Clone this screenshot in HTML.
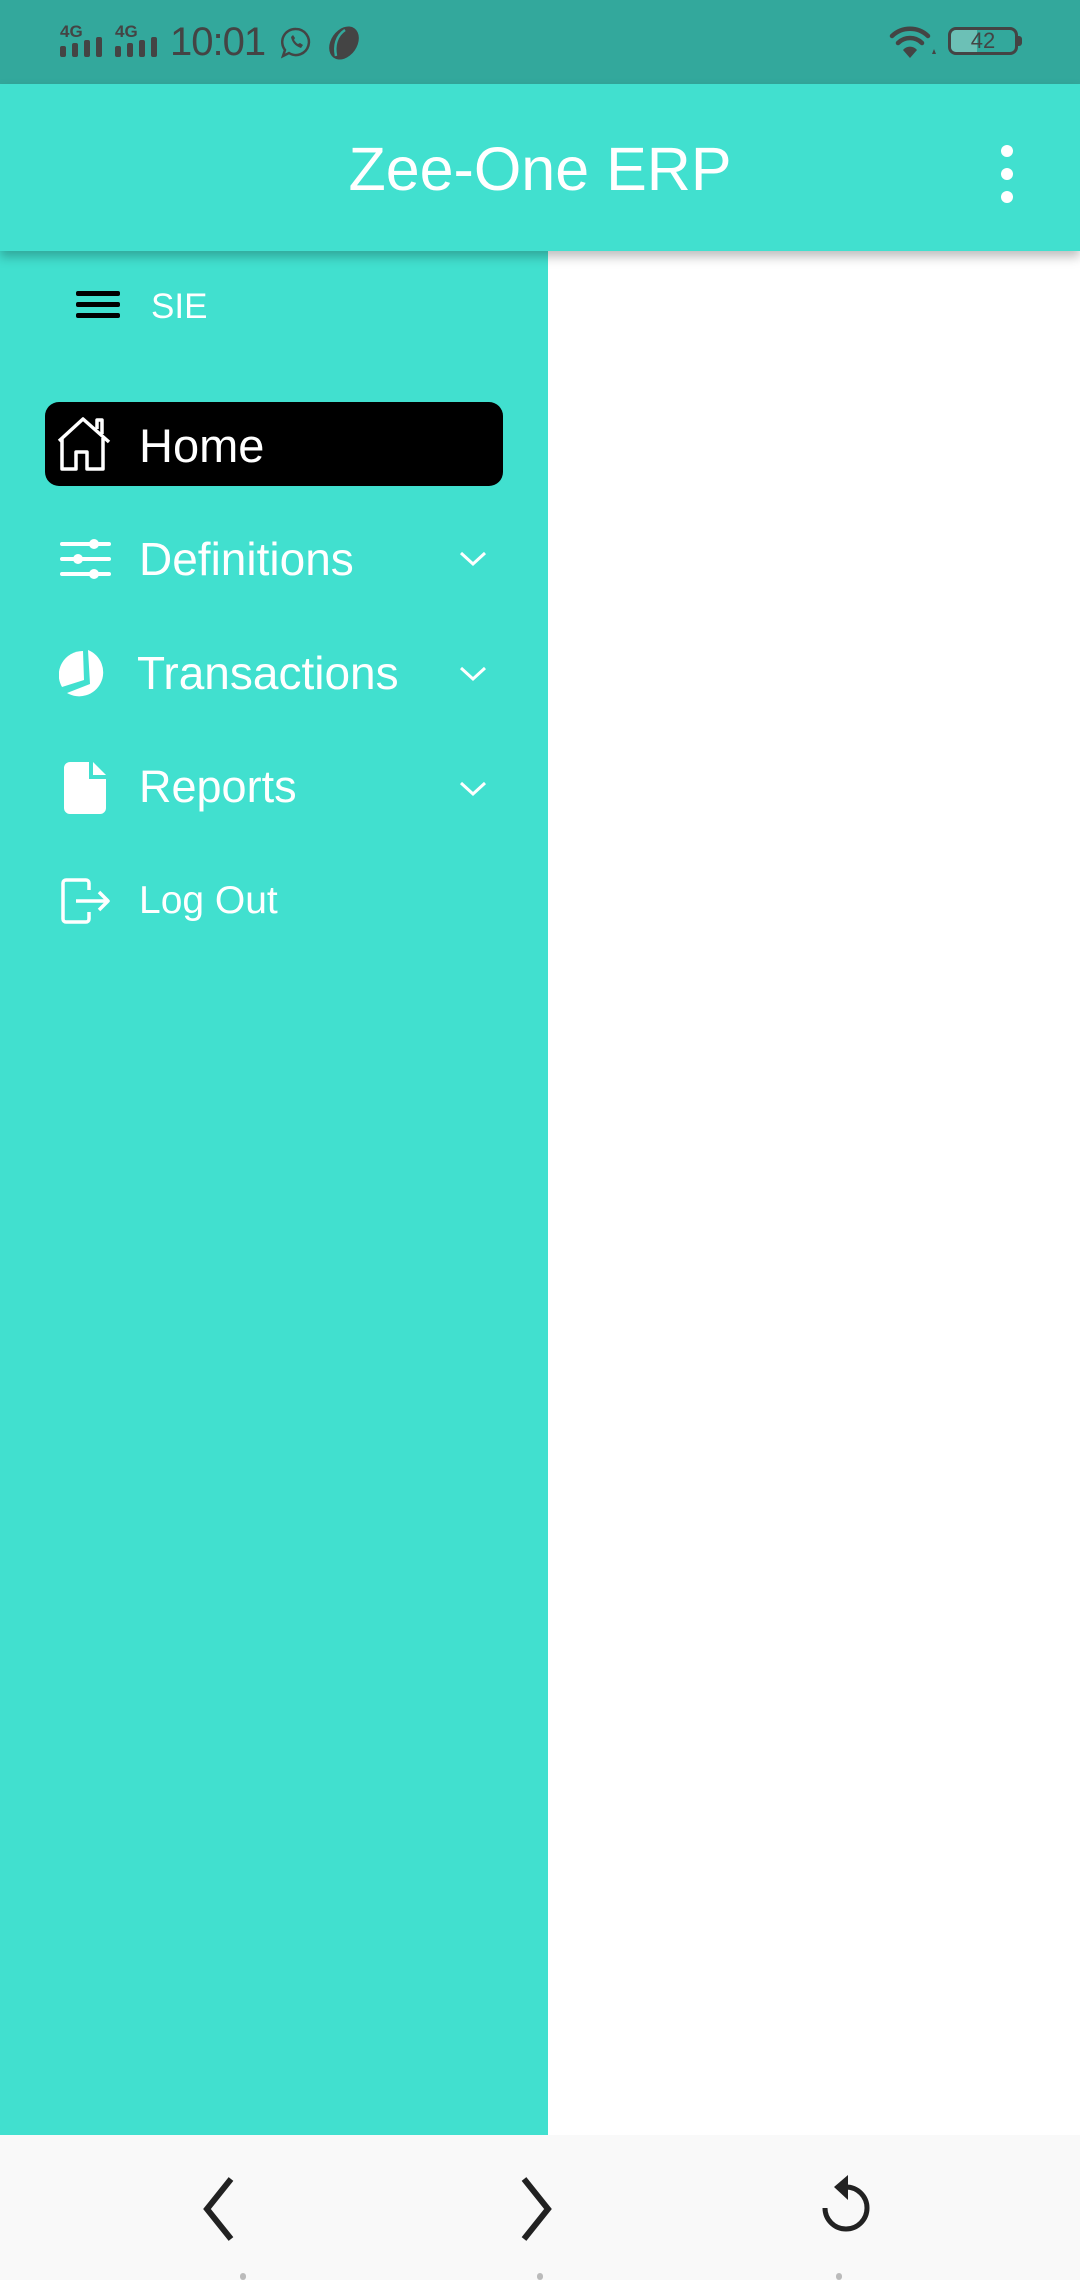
<!DOCTYPE html>
<html><head><meta charset="utf-8"><style>
*{margin:0;padding:0;box-sizing:border-box}
body{width:1080px;height:2280px;position:relative;overflow:hidden;background:#fff;font-family:"Liberation Sans",sans-serif}
.abs{position:absolute}
.t{position:absolute;color:#fff;white-space:nowrap;line-height:1}
</style></head><body>
<!-- status bar -->
<div class="abs" style="left:0;top:0;width:1080px;height:84px;background:#33a89c"></div>
<div class="abs" style="left:60px;top:22px;font-size:17px;font-weight:bold;color:#444">4G</div>
<div class="abs" style="left:115px;top:22px;font-size:17px;font-weight:bold;color:#444">4G</div>
<svg class="abs" style="left:58px;top:36px" width="110" height="22">
<g fill="#444"><rect x="2" y="10" width="6" height="11" rx="2"/><rect x="14" y="7" width="6" height="14" rx="2"/><rect x="26" y="4" width="6" height="17" rx="2"/><rect x="38" y="1" width="6" height="20" rx="2"/>
<rect x="57" y="10" width="6" height="11" rx="2"/><rect x="69" y="7" width="6" height="14" rx="2"/><rect x="81" y="4" width="6" height="17" rx="2"/><rect x="93" y="1" width="6" height="20" rx="2"/></g></svg>
<div class="abs" style="left:170px;top:20px;font-size:40px;color:#444;letter-spacing:-1px">10:01</div>
<svg class="abs" style="left:279px;top:26px" width="34" height="34" viewBox="0 0 34 34"><path d="M17 3a13 13 0 1 1-7 24l-6 3 2-6A13 13 0 0 1 17 3z" fill="none" stroke="#444" stroke-width="2.5"/><path d="M12 11c1 5 4 9 10 11l2-3-3-2-2 1c-2-1-3-3-4-4l1-2-2-3z" fill="#444"/></svg>
<svg class="abs" style="left:325px;top:25px" width="38" height="36" viewBox="0 0 38 36"><ellipse cx="19" cy="18" rx="18" ry="13" transform="rotate(-55 19 18)" fill="#444"/><path d="M20 5c-9 6-11 16-9 26" stroke="#33a89c" stroke-width="2.5" fill="none"/></svg>
<svg class="abs" style="left:888px;top:24px" width="50" height="36" viewBox="0 0 50 36"><g fill="none" stroke="#444" stroke-width="4.5" stroke-linecap="round"><path d="M4 12a26 26 0 0 1 36 0"/><path d="M10 19a17 17 0 0 1 24 0"/></g><path d="M15 26a9 9 0 0 1 14 0l-7 8z" fill="#444"/><path d="M44 30l4 0l-2-5z" fill="#444"/></svg>
<div class="abs" style="left:948px;top:27px;width:70px;height:28px;border:3.5px solid #444;border-radius:8px;overflow:hidden"><div style="width:26px;height:100%;background:#6cc0b6"></div></div>
<div class="abs" style="left:1018px;top:36px;width:4px;height:10px;background:#444;border-radius:0 3px 3px 0"></div>
<div class="abs" style="left:948px;top:28px;width:70px;text-align:center;font-size:22px;color:#444;line-height:26px">42</div>
<!-- app bar -->
<div class="abs" style="left:0;top:84px;width:1080px;height:167px;background:#41e0cf;box-shadow:0 6px 10px rgba(0,0,0,0.25);z-index:2"></div>
<div class="t" style="left:0;width:1080px;text-align:center;top:139px;font-size:61px;z-index:3">Zee-One ERP</div>
<div class="abs" style="left:1001px;top:145px;z-index:3"><div style="width:12px;height:12px;border-radius:6px;background:#fff;margin-bottom:11px"></div><div style="width:12px;height:12px;border-radius:6px;background:#fff;margin-bottom:11px"></div><div style="width:12px;height:12px;border-radius:6px;background:#fff"></div></div>
<!-- drawer -->
<div class="abs" style="left:0;top:251px;width:548px;height:1884px;background:#41e0cf"></div>
<div class="abs" style="left:76px;top:291px;width:44px;height:5px;background:#000;border-radius:2px"></div>
<div class="abs" style="left:76px;top:302px;width:44px;height:5px;background:#000;border-radius:2px"></div>
<div class="abs" style="left:76px;top:313px;width:44px;height:5px;background:#000;border-radius:2px"></div>
<div class="t" style="left:151px;top:289px;font-size:35px">SIE</div>
<div class="abs" style="left:45px;top:402px;width:458px;height:84px;background:#000;border-radius:14px"></div>
<svg class="abs" style="left:56px;top:414px" width="60" height="60" viewBox="0 0 60 60"><path d="M3 27L27 5 53 28M6 24V55H20V38H31V55H47V24M41 15V6H46V20" fill="none" stroke="#fff" stroke-width="3.5" stroke-linejoin="round"/></svg>
<div class="t" style="left:139px;top:422px;font-size:47px">Home</div>
<svg class="abs" style="left:60px;top:538px" width="52" height="42" viewBox="0 0 52 42"><g stroke="#fff" stroke-width="4" stroke-linecap="round"><path d="M2 6H49M2 21H49M2 36H49"/></g><g fill="#fff"><circle cx="34" cy="6" r="5"/><circle cx="18" cy="21" r="5"/><circle cx="34" cy="36" r="5"/></g></svg>
<div class="t" style="left:139px;top:536px;font-size:46px">Definitions</div>
<svg class="abs" style="left:459px;top:550px" width="28" height="18"><path d="M2 3L14 14 26 3" fill="none" stroke="#fff" stroke-width="3"/></svg>
<svg class="abs" style="left:59px;top:647px" width="54" height="54" viewBox="0 0 54 54"><path d="M29 3A24 24 0 1 1 8 46L31 37z" fill="#fff"/><path d="M24 4L25 33 3 40A24 24 0 0 1 24 4z" fill="#fff"/></svg>
<div class="t" style="left:137px;top:650px;font-size:46px">Transactions</div>
<svg class="abs" style="left:459px;top:665px" width="28" height="18"><path d="M2 3L14 14 26 3" fill="none" stroke="#fff" stroke-width="3"/></svg>
<svg class="abs" style="left:64px;top:761px" width="44" height="54" viewBox="0 0 44 54"><path d="M6 1H25V18H42V47a6 6 0 0 1-6 6H6a6 6 0 0 1-6-6V7a6 6 0 0 1 6-6z" fill="#fff"/><path d="M29 1L42 14H29z" fill="#fff"/></svg>
<div class="t" style="left:139px;top:764px;font-size:45px">Reports</div>
<svg class="abs" style="left:459px;top:780px" width="28" height="18"><path d="M2 3L14 14 26 3" fill="none" stroke="#fff" stroke-width="3"/></svg>
<svg class="abs" style="left:60px;top:878px" width="52" height="46" viewBox="0 0 52 46"><path d="M29 12V5a3 3 0 0 0-3-3H6a3 3 0 0 0-3 3v36a3 3 0 0 0 3 3h20a3 3 0 0 0 3-3v-7M16 23H48M39 14l9 9-9 9" fill="none" stroke="#fff" stroke-width="3.5" stroke-linejoin="round"/></svg>
<div class="t" style="left:139px;top:881px;font-size:39px">Log Out</div>
<!-- bottom nav -->
<div class="abs" style="left:0;top:2135px;width:1080px;height:145px;background:#f9f9f9"></div>
<svg class="abs" style="left:195px;top:2176px" width="44" height="66"><path d="M36 3L12 33 36 63" fill="none" stroke="#222" stroke-width="6"/></svg>
<svg class="abs" style="left:516px;top:2176px" width="44" height="66"><path d="M8 3L32 33 8 63" fill="none" stroke="#222" stroke-width="6"/></svg>
<svg class="abs" style="left:816px;top:2175px" width="60" height="66" viewBox="0 0 60 66"><path d="M9 33A21 21 0 1 0 30 12" fill="none" stroke="#222" stroke-width="5"/><path d="M32 0L18 12 32 25z" fill="#222"/></svg>
<div class="abs" style="left:240px;top:2273px;width:6px;height:7px;border-radius:3px;background:#bbb"></div>
<div class="abs" style="left:537px;top:2273px;width:6px;height:7px;border-radius:3px;background:#bbb"></div>
<div class="abs" style="left:836px;top:2273px;width:6px;height:7px;border-radius:3px;background:#bbb"></div>
</body></html>
